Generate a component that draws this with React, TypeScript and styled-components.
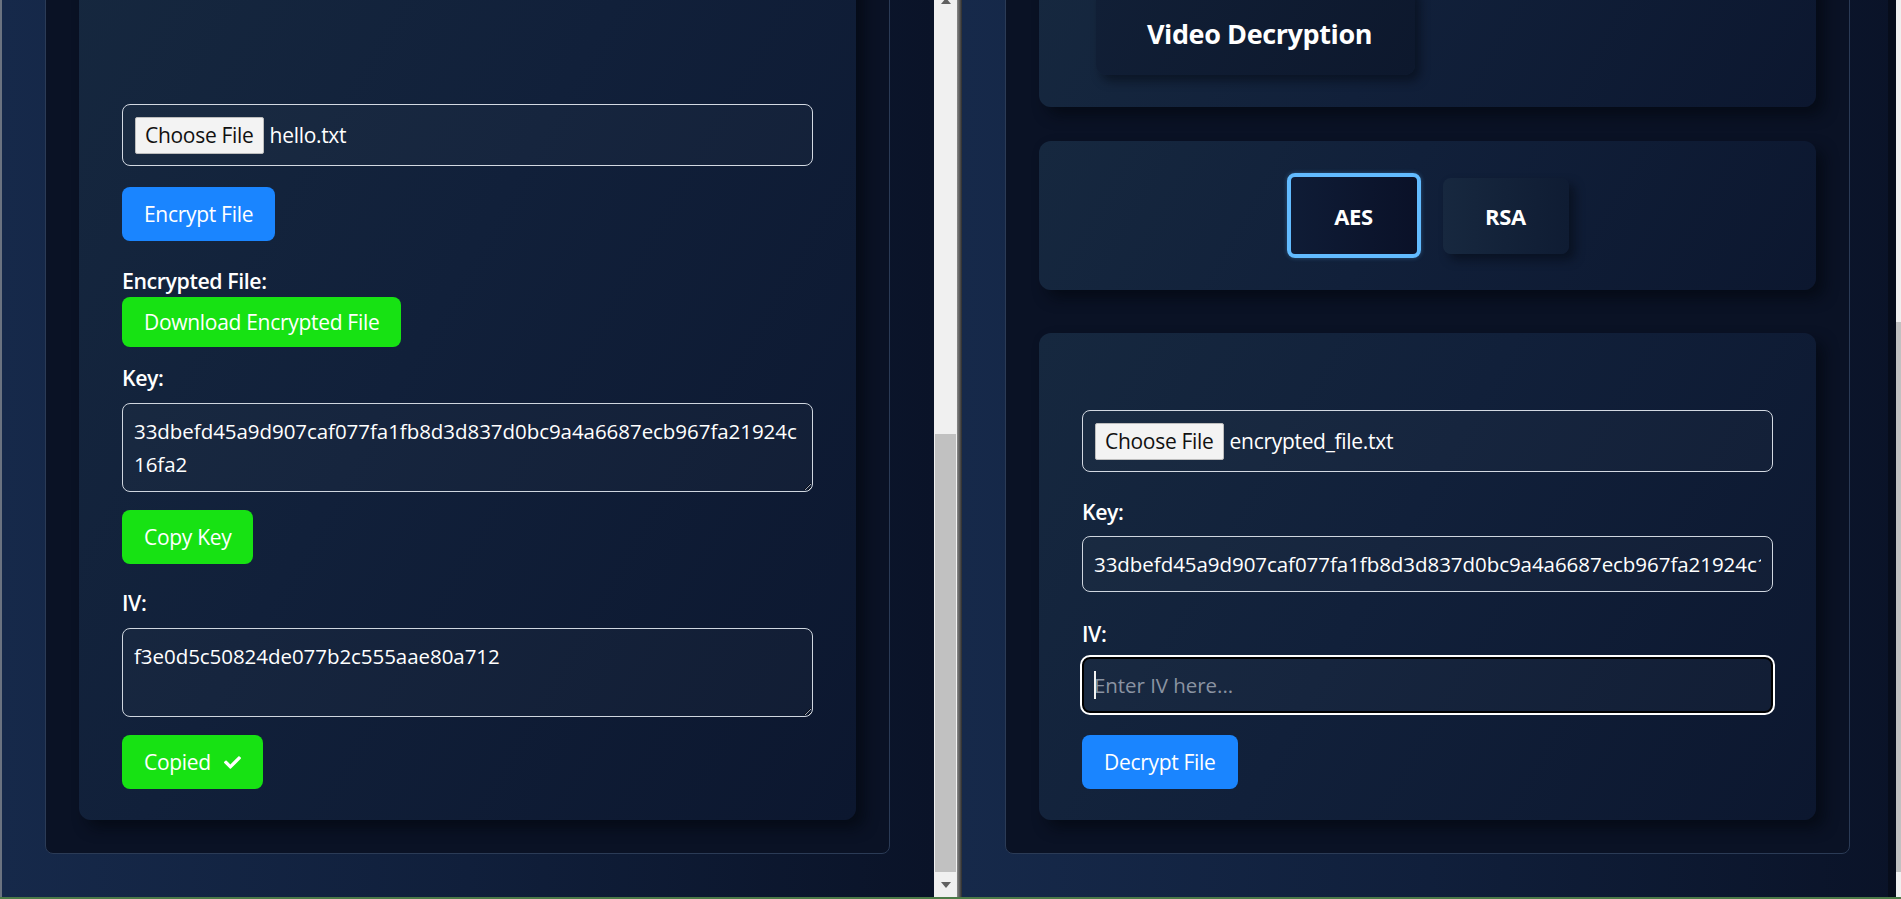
import React from "react";
import styled, { createGlobalStyle } from "styled-components";
import { FaCheck } from "react-icons/fa";

const FONT = `"Open Sans", "Noto Sans", Arial, sans-serif`;

const Global = createGlobalStyle`
  html, body { margin: 0; padding: 0; background: #0b1428; overflow: hidden; }
  * { box-sizing: border-box; }
`;

const Screen = styled.div`
  width: 1901px;
  height: 899px;
  display: flex;
  flex-direction: column;
  overflow: hidden;
  font-family: ${FONT};
`;

const Desk = styled.div`
  display: flex;
  height: 897px;
  flex: none;
`;

const Taskline = styled.div`
  height: 2px;
  flex: none;
  background: #4c7b47;
`;

const FrameEdge = styled.div`
  width: 2px;
  flex: none;
  background: #6b7380;
`;

const Window = styled.div<{ $w: number; $edge?: boolean }>`
  width: ${(p) => p.$w}px;
  flex: none;
  overflow: hidden;
  display: flex;
  flex-direction: column;
  background: linear-gradient(90deg, #16294a 0%, #101f3b 50%, #0a1328 100%);
  box-shadow: ${(p) => (p.$edge ? "inset -8px 0 0 #070d1b" : "none")};
`;

const Scrollbar = styled.div<{ $w: number }>`
  width: ${(p) => p.$w}px;
  flex: none;
  display: flex;
  flex-direction: column;
  align-items: center;
  background: #f0f0f0;
`;

const ArrowUp = styled.div`
  width: 0;
  height: 0;
  margin-top: -2px;
  border-left: 5px solid transparent;
  border-right: 5px solid transparent;
  border-bottom: 6px solid #606060;
`;

const Thumb = styled.div<{ $h: number; $inset: number }>`
  margin-top: auto;
  height: ${(p) => p.$h}px;
  width: calc(100% - ${(p) => p.$inset * 2}px);
  background: #c1c1c1;
`;

const ArrowBox = styled.div`
  height: 25px;
  width: 100%;
  display: flex;
  align-items: center;
  justify-content: center;
`;

const ArrowDown = styled.div`
  width: 0;
  height: 0;
  border-left: 5px solid transparent;
  border-right: 5px solid transparent;
  border-top: 6px solid #606060;
`;

const Divider = styled.div`
  width: 5px;
  flex: none;
  background: linear-gradient(90deg, #8a8a8a, #2c2c2c);
`;

const Card = styled.div<{ $top: number }>`
  margin: ${(p) => p.$top}px 0 0 43px;
  width: 845px;
  flex: none;
  border: 1px solid #2b3b56;
  border-radius: 8px;
  background: #0a1225;
  padding: 33px;
  display: flex;
  flex-direction: column;
`;

const Panel = styled.div<{ $pt: number; $pb: number; $mb?: number }>`
  border-radius: 12px;
  background: linear-gradient(120deg, #16283f 0%, #11203a 45%, #0c172f 100%);
  box-shadow: 8px 8px 14px rgba(3, 7, 16, 0.65);
  padding: ${(p) => p.$pt}px 43px ${(p) => p.$pb}px;
  margin-bottom: ${(p) => p.$mb ?? 0}px;
  display: flex;
  flex-direction: column;
  align-items: flex-start;
`;

const TabPanel = styled.div`
  height: 149px;
  margin-bottom: 43px;
  border-radius: 12px;
  background: linear-gradient(120deg, #16283f 0%, #11203a 45%, #0c172f 100%);
  box-shadow: 8px 8px 14px rgba(3, 7, 16, 0.65);
  display: flex;
  align-items: center;
  justify-content: center;
  gap: 22px;
`;

const Tab = styled.div<{ $active?: boolean }>`
  width: ${(p) => (p.$active ? 134 : 126)}px;
  height: ${(p) => (p.$active ? 85 : 76)}px;
  border-radius: 8px;
  border: ${(p) => (p.$active ? "4px solid #62bbff" : "none")};
  background: ${(p) =>
    p.$active
      ? "linear-gradient(90deg, #0f1c36, #0a1128)"
      : "linear-gradient(90deg, #17283f, #0f1c33)"};
  box-shadow: ${(p) =>
    p.$active ? "0 0 4px rgba(98,187,255,0.35)" : "6px 6px 10px rgba(3,7,16,0.5)"};
  display: flex;
  align-items: center;
  justify-content: center;
  color: #fff;
  font-size: 22px;
  font-weight: 700;
  letter-spacing: -0.3px;
`;

const TitleBox = styled.div`
  margin-left: 14px;
  width: 319px;
  height: 90px;
  border-radius: 10px;
  background: linear-gradient(120deg, #111f36, #0d182d);
  box-shadow: 5px 6px 10px rgba(3, 7, 16, 0.5);
  display: flex;
  align-items: flex-end;
  justify-content: center;
  padding: 0 0 23px 8px;
  color: #fff;
  font-size: 27px;
  font-weight: 700;
  letter-spacing: -0.4px;
`;

const FileBox = styled.div`
  align-self: stretch;
  height: 62px;
  border: 1px solid #d3d9e2;
  border-radius: 8px;
  background: rgba(255, 255, 255, 0.025);
  display: flex;
  align-items: center;
  gap: 6px;
  padding-left: 12px;
`;

const ChooseButton = styled.div`
  height: 37px;
  padding: 0 9px;
  background: #f3f3f3;
  border: 1px solid #bdbdbd;
  border-radius: 2px;
  display: flex;
  align-items: center;
  color: #111;
  font-size: 21px;
  letter-spacing: -0.3px;
`;

const FileName = styled.span`
  color: #fff;
  font-size: 21px;
  letter-spacing: -0.3px;
`;

const Button = styled.div<{ $color: "blue" | "green"; $mt: number; $h?: number }>`
  margin-top: ${(p) => p.$mt}px;
  height: ${(p) => p.$h ?? 54}px;
  padding: 0 22px;
  border-radius: 8px;
  background: ${(p) => (p.$color === "blue" ? "#1a85ff" : "#17e213")};
  color: #fff;
  font-size: 21px;
  letter-spacing: -0.3px;
  display: flex;
  align-items: center;
  gap: 13px;
`;

const Label = styled.div<{ $mt: number }>`
  margin-top: ${(p) => p.$mt}px;
  height: 27px;
  line-height: 27px;
  color: #fff;
  font-size: 21.3px;
  font-weight: 600;
  letter-spacing: -0.4px;
`;

const TextArea = styled.textarea`
  margin-top: 12px;
  align-self: stretch;
  height: 89px;
  padding: 11px;
  border: 1px solid #cfd6df;
  border-radius: 8px;
  background: rgba(255, 255, 255, 0.025);
  color: #fff;
  font-family: ${FONT};
  font-size: 20.5px;
  letter-spacing: -0.05px;
  line-height: 33px;
  resize: vertical;
  overflow: hidden;
  outline: none;
  color-scheme: dark;
`;

const InputWrap = styled.div<{ $mt: number }>`
  position: relative;
  margin-top: ${(p) => p.$mt}px;
  align-self: stretch;
`;

const TextInput = styled.input<{ $focused?: boolean }>`
  display: block;
  width: 100%;
  height: 56px;
  padding: 0 ${(p) => (p.$focused ? 10 : 11)}px;
  border: ${(p) => (p.$focused ? "2px solid #000" : "1px solid #cfd6df")};
  outline: ${(p) => (p.$focused ? "2px solid #ffffff" : "none")};
  outline-offset: 0;
  border-radius: 8px;
  background: rgba(255, 255, 255, 0.025);
  color: #fff;
  font-family: ${FONT};
  font-size: 20.5px;
  letter-spacing: -0.05px;
  &::placeholder {
    color: #8a93a2;
  }
`;

const Caret = styled.span`
  position: absolute;
  left: 12px;
  top: 14px;
  width: 1.5px;
  height: 28px;
  background: #f2f2f2;
`;

const KEY = "33dbefd45a9d907caf077fa1fb8d3d837d0bc9a4a6687ecb967fa21924c16fa2";
const IV = "f3e0d5c50824de077b2c555aae80a712";

export default function App() {
  return (
    <Screen>
      <Global />
      <Desk>
        <FrameEdge />
        <Window $w={932}>
          <Card $top={-120}>
            <Panel $pt={190} $pb={31}>
              <FileBox>
                <ChooseButton>Choose File</ChooseButton>
                <FileName>hello.txt</FileName>
              </FileBox>
              <Button $color="blue" $mt={21}>Encrypt File</Button>
              <Label $mt={26}>Encrypted File:</Label>
              <Button $color="green" $mt={3} $h={50}>Download Encrypted File</Button>
              <Label $mt={17}>Key:</Label>
              <TextArea
                readOnly
                wrap="off"
                value={"33dbefd45a9d907caf077fa1fb8d3d837d0bc9a4a6687ecb967fa21924c\n16fa2"}
              />
              <Button $color="green" $mt={18}>Copy Key</Button>
              <Label $mt={25}>IV:</Label>
              <TextArea readOnly value={IV} />
              <Button $color="green" $mt={18}>
                Copied
                <FaCheck size={17} />
              </Button>
            </Panel>
          </Card>
        </Window>
        <Scrollbar $w={23}>
          <ArrowUp />
          <Thumb $h={438} $inset={1} />
          <ArrowBox>
            <ArrowDown />
          </ArrowBox>
        </Scrollbar>
        <Divider />
        <Window $w={934} $edge>
          <Card $top={-60}>
            <Panel $pt={11} $pb={32} $mb={34}>
              <TitleBox>Video Decryption</TitleBox>
            </Panel>
            <TabPanel>
              <Tab $active>AES</Tab>
              <Tab>RSA</Tab>
            </TabPanel>
            <Panel $pt={77} $pb={31}>
              <FileBox>
                <ChooseButton>Choose File</ChooseButton>
                <FileName>encrypted_file.txt</FileName>
              </FileBox>
              <Label $mt={26}>Key:</Label>
              <InputWrap $mt={11}>
                <TextInput readOnly value={KEY} />
              </InputWrap>
              <Label $mt={28}>IV:</Label>
              <InputWrap $mt={10}>
                <TextInput $focused readOnly placeholder="Enter IV here..." />
                <Caret />
              </InputWrap>
              <Button $color="blue" $mt={22}>Decrypt File</Button>
            </Panel>
          </Card>
        </Window>
        <Scrollbar $w={5}>
          <Thumb $h={550} $inset={0} />
          <ArrowBox />
        </Scrollbar>
      </Desk>
      <Taskline />
    </Screen>
  );
}
